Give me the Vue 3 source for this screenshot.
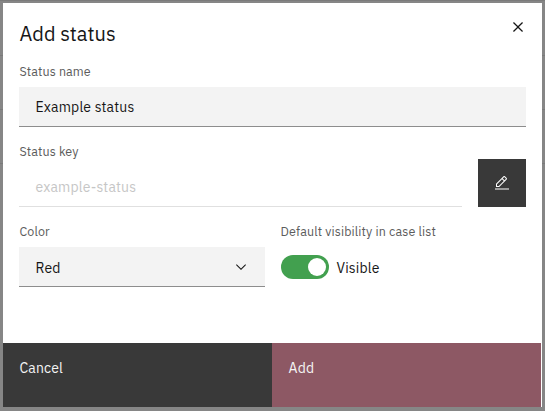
<script setup>
import { ref } from 'vue'

const name = ref('Example status')
const statusKey = ref('example-status')
const color = ref('Red')
const visible = ref(true)
</script>

<template>
  <div class="backdrop">
    <section class="modal" role="dialog">
      <header class="header">
        <h3 class="title">Add status</h3>
        <button class="close">
          <svg width="20" height="20" viewBox="0 0 32 32" fill="currentColor">
            <path d="M17.4141 16L24 9.4141 22.5859 8 16 14.5859 9.4143 8 8 9.4141 14.5859 16 8 22.5859 9.4143 24 16 17.4141 22.5859 24 24 22.5859 17.4141 16z" />
          </svg>
        </button>
      </header>
      <div class="content">
        <div class="field">
          <label class="label">Status name</label>
          <div class="input">{{ name }}</div>
        </div>
        <div class="key-row">
          <div class="field">
            <label class="label">Status key</label>
            <div class="input disabled">{{ statusKey }}</div>
          </div>
          <button class="edit">
            <svg width="16" height="16" viewBox="0 0 32 32" fill="currentColor">
              <path d="M2 27H30V29H2zM25.4 9c.8-.8.8-2 0-2.8l-3.6-3.6c-.8-.8-2-.8-2.8 0l-15 15V24h6.4L25.4 9zM20.4 4L24 7.6l-3 3L17.4 7 20.4 4zM6 22v-3.6l10-10 3.6 3.6-10 10H6z" />
            </svg>
          </button>
        </div>
        <div class="columns">
          <div class="field">
            <label class="label">Color</label>
            <div class="input select">
              <span class="value">{{ color }}</span>
              <svg width="16" height="16" viewBox="0 0 16 16" fill="currentColor">
                <path d="M8 11L3 6 3.7 5.3 8 9.6 12.3 5.3 13 6z" />
              </svg>
            </div>
          </div>
          <div class="field">
            <label class="label label-toggle">Default visibility in case list</label>
            <div class="toggle-row" @click="visible = !visible">
              <span class="toggle" :class="{ on: visible }"><i class="knob"></i></span>
              <span class="toggle-text">Visible</span>
            </div>
          </div>
        </div>
      </div>
      <footer class="footer">
        <button class="action cancel">Cancel</button>
        <button class="action add">Add</button>
      </footer>
    </section>
  </div>
</template>

<style>
body {
  margin: 0;
}
</style>

<style scoped>
* {
  box-sizing: border-box;
}

.backdrop {
  width: 545px;
  height: 411px;
  padding: 3px 3px 4px;
  overflow: hidden;
  background:
    linear-gradient(#7a7a7a, #7a7a7a) 0 0 / 100% 1px no-repeat,
    linear-gradient(#7a7a7a, #7a7a7a) 0 55px / 100% 1px no-repeat,
    linear-gradient(#7a7a7a, #7a7a7a) 0 109px / 100% 1px no-repeat,
    linear-gradient(#7a7a7a, #7a7a7a) 0 163px / 100% 1px no-repeat,
    #868686;
  font-family: "IBM Plex Sans", Roboto, sans-serif;
  color: #161616;
}

.modal {
  display: flex;
  flex-direction: column;
  width: 539px;
  height: 404px;
  background: #fff;
}

button {
  margin: 0;
  border: 0;
  font: inherit;
}

.header {
  display: flex;
  justify-content: space-between;
  height: 60px;
  padding-left: 16.5px;
}

.title {
  margin: 17px 0 0;
  font-size: 20px;
  font-weight: 400;
  line-height: 28px;
  letter-spacing: 0;
}

.close {
  display: flex;
  align-items: center;
  justify-content: center;
  width: 48px;
  height: 48px;
  padding: 0;
  background: transparent;
  color: #161616;
}

.content {
  display: flex;
  flex: 1;
  flex-direction: column;
  gap: 16px;
  padding: 0 16px;
}

.field {
  display: flex;
  flex: 1;
  flex-direction: column;
  gap: 8px;
  min-width: 0;
}

.content > .field,
.key-row,
.columns {
  flex: none;
  height: 64px;
}

.label {
  height: 16px;
  padding-left: 0.5px;
  font-size: 12.5px;
  line-height: 17px;
  letter-spacing: 0.08px;
  color: #5c5c5c;
  white-space: nowrap;
}

.label-toggle {
  padding-left: 0;
  letter-spacing: 0.12px;
}

.input {
  height: 40px;
  padding: 0 16.5px;
  border-bottom: 1px solid #8d8d8d;
  background: #f3f3f3;
  font-size: 14px;
  line-height: 40px;
  letter-spacing: 0.16px;
}

.disabled {
  border-bottom-color: #e0e0e0;
  background: #fff;
  color: #c6c6c6;
}

.key-row {
  display: flex;
  align-items: flex-end;
  gap: 16px;
}

.edit {
  display: flex;
  align-items: center;
  justify-content: center;
  width: 48px;
  height: 48px;
  padding: 0;
  background: #393939;
  color: #fff;
}

.columns {
  display: grid;
  grid-template-columns: 1fr 1fr;
  gap: 16px;
}

.select {
  display: flex;
  align-items: center;
  justify-content: space-between;
  padding-right: 16px;
}

.value {
  padding-top: 2px;
}

.toggle-row {
  display: flex;
  align-items: center;
  gap: 8px;
  height: 40px;
}

.toggle {
  display: flex;
  align-items: center;
  width: 48px;
  height: 24px;
  padding: 3px;
  border-radius: 12px;
  background: #8d8d8d;
}

.toggle.on {
  justify-content: flex-end;
  background: #42a04f;
}

.knob {
  width: 18px;
  height: 18px;
  border-radius: 50%;
  background: #fff;
}

.toggle-text {
  padding-top: 2px;
  font-size: 14px;
  line-height: 18px;
  letter-spacing: 0.16px;
}

.footer {
  display: flex;
  height: 64px;
}

.action {
  display: flex;
  align-items: flex-start;
  width: 269px;
  padding: 16px 16.5px;
  font-size: 14px;
  line-height: 18px;
  letter-spacing: 0.16px;
  text-align: left;
  color: #f4f4f4;
}

.cancel {
  background: #393939;
}

.add {
  background: #8d5864;
}
</style>
